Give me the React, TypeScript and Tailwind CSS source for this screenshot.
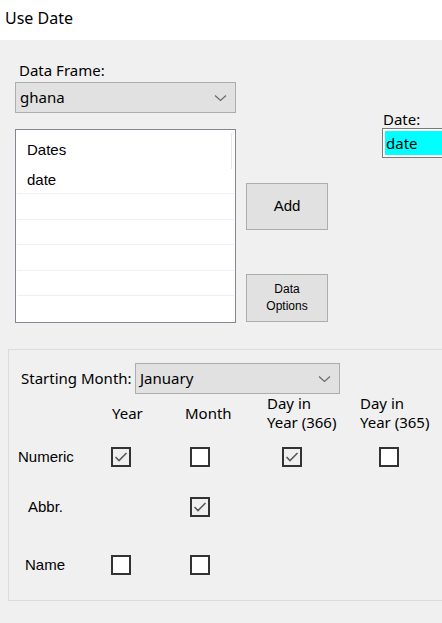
import * as React from 'react';

// Segoe-ish and MS Sans Serif-ish stacks
const SEGOE = 'font-["Noto_Sans",sans-serif]';
const MSSANS = 'font-["Liberation_Sans",Arial,sans-serif]';

const Chevron = () => (
  <svg width="13" height="8" viewBox="0 0 13 8" className="shrink-0">
    <path d="M1 1.5 L6.5 6.5 L12 1.5" fill="none" stroke="#6a6a6a" strokeWidth="1.2" />
  </svg>
);

const Combo = ({ value, className }: { value: string; className: string }) => (
  <div
    className={`flex shrink-0 items-center justify-between border border-[#adadad] bg-[#e1e1e1] pl-[4px] pr-[8px] text-[15px] text-black ${className}`}
  >
    <span className={SEGOE}>{value}</span>
    <Chevron />
  </div>
);

const Check = ({ checked }: { checked?: boolean }) => (
  <div
    className={`flex h-[20px] w-[20px] shrink-0 items-center justify-center border-2 border-[#333333] ${
      checked ? 'bg-[#f0f0f0]' : 'bg-white'
    }`}
  >
    {checked && (
      <svg width="14" height="12" viewBox="0 0 14 12">
        <path d="M1.5 6 L5 9.5 L12.5 2" fill="none" stroke="#5a5a5a" strokeWidth="1.6" />
      </svg>
    )}
  </div>
);

const Button = ({ children, className }: { children: React.ReactNode; className: string }) => (
  <div
    className={`flex shrink-0 flex-col items-center justify-center border border-[#adadad] bg-[#e1e1e1] text-black ${className}`}
  >
    {children}
  </div>
);

export default function App() {
  return (
    <div className="h-[623px] w-[442px] overflow-hidden bg-[#f0f0f0] text-black">
      {/* Title bar */}
      <div className={`flex h-[40px] items-center bg-white pl-[5px] pb-[4px] text-[16px] ${SEGOE}`}>
        Use Date
      </div>

      {/* Top section */}
      <div className="flex pl-[15px]">
        <div className="flex w-[221px] shrink-0 flex-col">
          <div className={`mt-[20px] h-[20px] pl-[4px] text-[15px] leading-[20px] ${SEGOE}`}>Data Frame:</div>
          <Combo value="ghana" className="mt-[2px] h-[31px]" />
          <div className="mt-[16px] flex h-[194px] flex-col border border-[#828790] bg-white p-px">
            <div className="relative flex flex-1 flex-col">
              <div className={`flex h-[37px] items-end pb-[7px] pl-[10px] text-[15px] ${MSSANS}`}>Dates</div>
              <div className={`flex h-[25px] items-center pl-[10px] text-[15px] ${MSSANS}`}>date</div>
              {[0, 1, 2, 3, 4].map((i) => (
                <div key={i} className="h-[25.5px] border-t border-[#f0f0f0]" />
              ))}
              <div className="absolute right-[2px] top-[2px] h-[36px] w-px bg-[#e8e8e8]" />
            </div>
          </div>
        </div>

        <div className="ml-[10px] flex shrink-0 flex-col">
          <Button className={`mt-[143px] h-[47px] w-[82px] text-[15px] ${MSSANS}`}>Add</Button>
          <Button className={`mt-[44px] h-[48px] w-[82px] text-[12px] leading-[17px] ${MSSANS}`}>
            <span>Data</span>
            <span>Options</span>
          </Button>
        </div>

        <div className="ml-[54px] flex shrink-0 flex-col">
          <div className={`mt-[71px] h-[17px] pl-px text-[15px] leading-[17px] ${SEGOE}`}>Date:</div>
          <div className="h-[30px] w-[80px] border border-[#7a7a7a] bg-white p-[2px]">
            <div className={`flex h-full items-center bg-[#00ffff] pl-[1px] text-[15px] ${SEGOE}`}>date</div>
          </div>
        </div>
      </div>

      {/* Options group */}
      <div className="ml-[8px] mt-[26px] flex h-[252px] w-[450px] flex-col border border-[#dcdcdc]">
        <div className="mt-[13px] flex items-center">
          <span className={`ml-[12px] w-[114px] shrink-0 text-[15px] ${SEGOE}`}>Starting Month:</span>
          <Combo value="January" className="h-[31px] w-[205px]" />
        </div>

        <div className={`flex h-[38px] items-center text-[15px] leading-[19px] ${SEGOE}`}>
          <div className="w-[103px] shrink-0" />
          <div className="w-[73px] shrink-0">Year</div>
          <div className="w-[82px] shrink-0">Month</div>
          <div className="w-[93px] shrink-0">
            Day in
            <br />
            Year (366)
          </div>
          <div className="shrink-0">
            Day in
            <br />
            Year (365)
          </div>
        </div>

        <div className="mt-[15px] flex h-[20px] items-center">
          <div className={`w-[102px] shrink-0 pl-[9px] text-[15px] ${MSSANS}`}>Numeric</div>
          <div className="w-[79px] shrink-0">
            <Check checked />
          </div>
          <div className="w-[92px] shrink-0">
            <Check />
          </div>
          <div className="w-[97px] shrink-0">
            <Check checked />
          </div>
          <div>
            <Check />
          </div>
        </div>

        <div className="mt-[30px] flex h-[20px] items-center">
          <div className={`w-[181px] shrink-0 pl-[19px] text-[15px] ${MSSANS}`}>Abbr.</div>
          <Check checked />
        </div>

        <div className="mt-[38px] flex h-[20px] items-center">
          <div className={`w-[102px] shrink-0 pl-[16px] text-[15px] ${MSSANS}`}>Name</div>
          <div className="w-[79px] shrink-0">
            <Check />
          </div>
          <Check />
        </div>
      </div>
    </div>
  );
}
